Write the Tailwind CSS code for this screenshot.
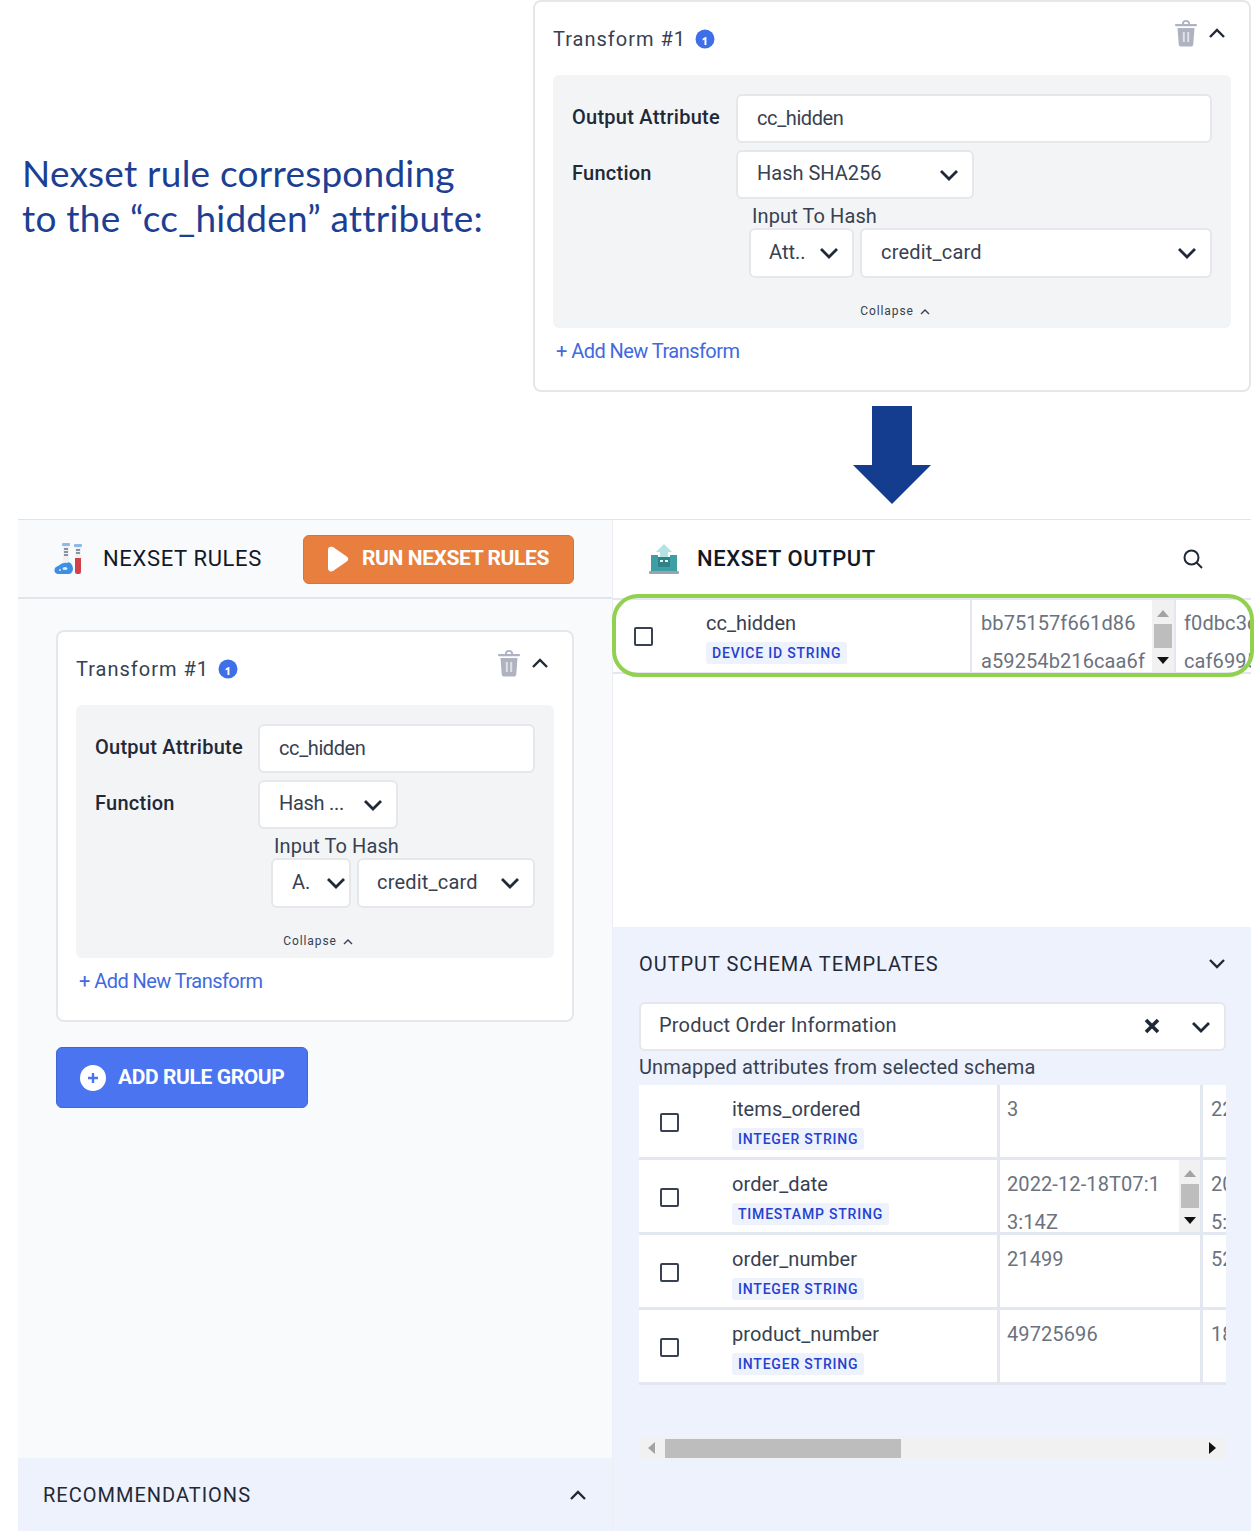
<!doctype html>
<html lang="en">
<head>
  <meta charset="UTF-8" />
  <title>Nexset rule</title>
  <script src="https://cdn.jsdelivr.net/npm/@tailwindcss/browser@4"></script>
</head>
<body class="bg-white">
<div class="relative w-[1254px] h-[1531px] overflow-hidden font-['Roboto',sans-serif] text-[#1f2937]">

  <!-- Top: caption and transform card -->
  <div class="flex h-[519px]">
    <div class="w-[533px] shrink-0 pl-[22px] pt-[150px] font-['Lato',sans-serif] text-[37px] leading-[45px] tracking-[.22px] text-[#1c3f94]">
      Nexset rule corresponding<br />to the “cc_hidden” attribute:
    </div>
    <div class="w-[718px] shrink-0">
      <div class="h-[392px] bg-white border-2 border-[#e5e7eb] rounded-lg px-[18px] pt-[18px]">
        <div class="flex items-start h-[55px]">
          <span class="mt-[5px] text-[20px] leading-[28px] tracking-[1px] text-[#374151]">Transform #1</span>
          <svg class="ml-[9px] mt-[9px]" width="20" height="20" viewBox="0 0 20 20"><circle cx="10" cy="10" r="9.500" fill="#3f6fe8"/><path d="M7.600 9.700 10.400 7.900h1v8h-1.900V10.400l-1.900 1z" fill="#fff"/></svg>
          <svg class="ml-auto mr-[10px] mt-[0px]" width="24" height="27" viewBox="0 0 24 27"><path d="M8 4V3.500a4 3.500 0 0 1 8 0V4h6a1 1 0 0 1 0 2.200H2A1 1 0 0 1 2 4zM10 4h4V3.500a2 1.800 0 0 0-4 0zM3.500 8h17l-1.200 16a2.800 2.800 0 0 1-2.800 2.600h-9A2.800 2.800 0 0 1 4.700 24z" fill="#aeb3bf"/><path d="M9.800 12v10M14.200 12v10" stroke="#dfe1e6" stroke-width="2"/></svg>
          <svg class="mr-[5px] mt-[7px]" width="18" height="12" viewBox="0 0 18 12"><path d="M2 10 9 3l7 7" fill="none" stroke="#1f2937" stroke-width="2.400"/></svg>
        </div>
        <div class="w-[678px] h-[253px] bg-[#f3f4f6] rounded-md px-[19px] pt-[19px]">
          <div class="flex gap-[17px]">
            <label class="w-[147px] pt-[9px] text-[20px] leading-[28px] tracking-[.25px] font-medium whitespace-nowrap text-[#1f2937]">Output Attribute</label>
            <div class="flex items-center w-[476px] h-[49px] bg-white border-2 border-[#e5e7eb] rounded-md px-[19px] pb-[2px] text-[20px] tracking-[-.4px] text-[#374151]">cc_hidden</div>
          </div>
          <div class="flex gap-[17px] mt-[7px]">
            <label class="w-[147px] pt-[9px] text-[20px] leading-[28px] tracking-[.25px] font-medium text-[#1f2937]">Function</label>
            <div class="flex items-center justify-between w-[238px] h-[49px] bg-white border-2 border-[#e5e7eb] rounded-md pl-[19px] pr-[13px] text-[20px] text-[#374151]">
              <span class="mb-[3px]">Hash SHA256</span>
              <svg width="20" height="12" viewBox="0 0 20 12"><path d="M2 2l8 8 8-8" fill="none" stroke="#1f2937" stroke-width="2.800"/></svg>
            </div>
          </div>
          <div class="ml-[180px] mt-[4px] text-[20px] leading-[26px] tracking-[.1px] text-[#374151]">Input To Hash</div>
          <div class="flex gap-[6px] ml-[177px] mt-[-1px]">
            <div class="flex items-center justify-between w-[105px] h-[50px] bg-white border-2 border-[#e5e7eb] rounded-md pl-[18px] pr-[13px] text-[20px] text-[#374151]">
              <span class="mb-[3px]">Att..</span>
              <svg width="20" height="12" viewBox="0 0 20 12"><path d="M2 2l8 8 8-8" fill="none" stroke="#1f2937" stroke-width="2.800"/></svg>
            </div>
            <div class="flex items-center justify-between w-[352px] h-[50px] bg-white border-2 border-[#e5e7eb] rounded-md pl-[19px] pr-[13px] text-[20px] tracking-[.2px] text-[#374151]">
              <span class="mb-[3px]">credit_card</span>
              <svg width="20" height="12" viewBox="0 0 20 12"><path d="M2 2l8 8 8-8" fill="none" stroke="#1f2937" stroke-width="2.800"/></svg>
            </div>
          </div>
          <div class="flex items-center justify-center gap-[6px] mt-[25px] ml-[6px] text-[12px] leading-[16px] tracking-[.9px] text-[#374151]">
            Collapse
            <svg width="10" height="7" viewBox="0 0 10 7"><path d="M1 6l4-4 4 4" fill="none" stroke="#374151" stroke-width="1.400"/></svg>
          </div>
        </div>
        <div class="mt-[9px] ml-[3px] text-[20px] leading-[28px] tracking-[-.55px] text-[#4169e1]">+ Add New Transform</div>
      </div>
    </div>
  </div>

  <!-- Arrow between the card and the panels -->
  <svg class="absolute left-[852px] top-[406px]" width="80" height="99" viewBox="0 0 80 99"><path d="M20 0h40v59h19L40 98 1 59h19z" fill="#143d8f"/></svg>

  <!-- Panels -->
  <div class="flex ml-[18px] w-[1233px] h-[1012px] border-t border-[#dfe3ea]">

    <!-- Nexset rules -->
    <div class="flex flex-col w-[595px] shrink-0 bg-[#f9fafc] border-r border-[#eceef2]">
      <div class="flex items-center h-[79px] shrink-0 border-b-2 border-[#e2e5eb] pl-[36px]">
        <svg width="30" height="33" viewBox="0 0 30 33">
          <rect x="9" y="4" width="6" height="18" fill="#eef0f4"/>
          <path d="M10 7h4M10 10h4M10 13h4" stroke="#6b7280" stroke-width="1.500"/>
          <rect x="8" y="1" width="8" height="3" rx="1" fill="#8db8e8"/>
          <rect x="21" y="5" width="6" height="12" fill="#eef0f4"/>
          <path d="M22 8h4M22 11h4" stroke="#6b7280" stroke-width="1.500"/>
          <rect x="20" y="2" width="8" height="3" rx="1" fill="#8db8e8"/>
          <path d="M21 16h6v14a2 2 0 0 1-2 2h-2a2 2 0 0 1-2-2z" fill="#d2404a"/>
          <path d="M4 24q5-4 9-3 3-2 5 2 2 4 0 7-1 2-3 2H4q-4-1-3.500-4 0-3 3.500-4z" fill="#3c8ee6"/>
          <ellipse cx="11" cy="26.500" rx="2.500" ry="1.500" fill="#dbeafe"/>
          <circle cx="6" cy="28" r="1" fill="#dbeafe"/>
        </svg>
        <span class="ml-[19px] w-[162px] text-[22px] leading-[28px] tracking-[.65px] whitespace-nowrap text-[#111827]">NEXSET RULES</span>
        <div class="flex items-center ml-[38px] mt-[1px] w-[271px] h-[49px] bg-[#e97f3f] border border-[#d9733a] rounded-md pl-[23px]">
          <svg width="22" height="26" viewBox="0 0 22 26"><path d="M1 4c0-3 2-4 5-3l13 9c3 2 3 4 0 6L6 25c-3 1-5 0-5-3z" fill="#fff"/></svg>
          <span class="ml-[13px] text-[21px] font-bold tracking-[-.4px] whitespace-nowrap text-white">RUN NEXSET RULES</span>
        </div>
      </div>

      <div class="flex-1 pl-[38px] pt-[31px]">
        <div class="w-[518px] h-[392px] bg-white border-2 border-[#e5e7eb] rounded-lg px-[18px] pt-[18px]">
          <div class="flex items-start h-[55px]">
            <span class="mt-[5px] text-[20px] leading-[28px] tracking-[1px] text-[#374151]">Transform #1</span>
            <svg class="ml-[9px] mt-[9px]" width="20" height="20" viewBox="0 0 20 20"><circle cx="10" cy="10" r="9.500" fill="#3f6fe8"/><path d="M7.600 9.700 10.400 7.900h1v8h-1.900V10.400l-1.900 1z" fill="#fff"/></svg>
            <svg class="ml-auto mr-[10px] mt-[0px]" width="24" height="27" viewBox="0 0 24 27"><path d="M8 4V3.500a4 3.500 0 0 1 8 0V4h6a1 1 0 0 1 0 2.200H2A1 1 0 0 1 2 4zM10 4h4V3.500a2 1.800 0 0 0-4 0zM3.500 8h17l-1.200 16a2.800 2.800 0 0 1-2.800 2.600h-9A2.800 2.800 0 0 1 4.700 24z" fill="#aeb3bf"/><path d="M9.800 12v10M14.200 12v10" stroke="#dfe1e6" stroke-width="2"/></svg>
            <svg class="mr-[5px] mt-[7px]" width="18" height="12" viewBox="0 0 18 12"><path d="M2 10 9 3l7 7" fill="none" stroke="#1f2937" stroke-width="2.400"/></svg>
          </div>
          <div class="w-[478px] h-[253px] bg-[#f3f4f6] rounded-md px-[19px] pt-[19px]">
            <div class="flex gap-[17px]">
              <label class="w-[146px] pt-[9px] text-[20px] leading-[28px] tracking-[.25px] font-medium whitespace-nowrap">Output Attribute</label>
              <div class="flex items-center w-[277px] h-[49px] bg-white border-2 border-[#e5e7eb] rounded-md px-[19px] pb-[2px] text-[20px] tracking-[-.4px] text-[#374151]">cc_hidden</div>
            </div>
            <div class="flex gap-[17px] mt-[7px]">
              <label class="w-[146px] pt-[9px] text-[20px] leading-[28px] tracking-[.25px] font-medium">Function</label>
              <div class="flex items-center justify-between w-[140px] h-[49px] bg-white border-2 border-[#e5e7eb] rounded-md pl-[19px] pr-[13px] text-[20px] tracking-[-.3px] text-[#374151]">
                <span class="mb-[3px] whitespace-nowrap">Hash ...</span>
                <svg width="20" height="12" viewBox="0 0 20 12"><path d="M2 2l8 8 8-8" fill="none" stroke="#1f2937" stroke-width="2.800"/></svg>
              </div>
            </div>
            <div class="ml-[179px] mt-[4px] text-[20px] leading-[26px] tracking-[.1px] text-[#374151]">Input To Hash</div>
            <div class="flex gap-[6px] ml-[176px] mt-[-1px]">
              <div class="flex items-center justify-between w-[80px] h-[50px] bg-white border-2 border-[#e5e7eb] rounded-md pl-[19px] pr-[3px] text-[20px] text-[#374151]">
                <span class="mb-[3px]">A.</span>
                <svg width="20" height="12" viewBox="0 0 20 12"><path d="M2 2l8 8 8-8" fill="none" stroke="#1f2937" stroke-width="2.800"/></svg>
              </div>
              <div class="flex items-center justify-between w-[178px] h-[50px] bg-white border-2 border-[#e5e7eb] rounded-md pl-[18px] pr-[13px] text-[20px] tracking-[.2px] text-[#374151]">
                <span class="mb-[3px]">credit_card</span>
                <svg width="20" height="12" viewBox="0 0 20 12"><path d="M2 2l8 8 8-8" fill="none" stroke="#1f2937" stroke-width="2.800"/></svg>
              </div>
            </div>
            <div class="flex items-center justify-center gap-[6px] mt-[25px] ml-[6px] text-[12px] leading-[16px] tracking-[.9px] text-[#374151]">
              Collapse
              <svg width="10" height="7" viewBox="0 0 10 7"><path d="M1 6l4-4 4 4" fill="none" stroke="#374151" stroke-width="1.400"/></svg>
            </div>
          </div>
          <div class="mt-[9px] ml-[3px] text-[20px] leading-[28px] tracking-[-.55px] text-[#4169e1]">+ Add New Transform</div>
        </div>

        <div class="flex items-center mt-[25px] w-[252px] h-[61px] bg-[#4a74f0] border border-[#3f66da] rounded-md pl-[23px]">
          <svg width="26" height="26" viewBox="0 0 26 26"><circle cx="13" cy="13" r="13" fill="#fff"/><path d="M13 8v10M8 13h10" stroke="#4a74f0" stroke-width="2.400"/></svg>
          <span class="ml-[12px] text-[21px] font-bold tracking-[-.4px] whitespace-nowrap text-white">ADD RULE GROUP</span>
        </div>
      </div>

      <div class="flex items-center justify-between h-[73px] shrink-0 bg-[#eef2fd] pl-[25px] pr-[25px]">
        <span class="text-[20px] tracking-[1px] text-[#1f2937]">RECOMMENDATIONS</span>
        <svg width="18" height="12" viewBox="0 0 18 12"><path d="M2 10 9 3l7 7" fill="none" stroke="#1f2937" stroke-width="2.400"/></svg>
      </div>
    </div>

    <!-- Nexset output -->
    <div class="flex flex-col flex-1 min-w-0 bg-white">
      <div class="flex items-center h-[78px] shrink-0 pl-[36px] pr-[47px]">
        <svg width="30" height="32" viewBox="0 0 30 32">
          <path d="M15 1l8 8h-4v5h-8V9H7z" fill="#b5e3e3"/>
          <path d="M2 12h7v4h12v-4h7v16H2z" fill="#3d9ea3"/>
          <rect x="9" y="14" width="12" height="10" fill="#2f8388"/>
          <path d="M11 18h3M16 18h3" stroke="#e6f5f5" stroke-width="2"/>
          <rect x="0" y="28" width="30" height="3" rx="1" fill="#98a4ab"/>
        </svg>
        <span class="ml-[18px] text-[22px] leading-[28px] tracking-[.6px] text-[#111827] font-medium">NEXSET OUTPUT</span>
        <svg class="ml-auto" width="22" height="22" viewBox="0 0 22 22"><circle cx="9.500" cy="9.500" r="7" fill="none" stroke="#1f2937" stroke-width="2"/><path d="M14.500 14.500 20 20" stroke="#1f2937" stroke-width="2"/></svg>
      </div>

      <!-- Result row -->
      <div class="flex h-[76px] shrink-0 border-t-2 border-b-2 border-[#e2e7f0] overflow-hidden">
        <div class="w-[93px] shrink-0 pl-[21px] pt-[27px]"><div class="w-[19px] h-[19px] border-2 border-[#374151] rounded-[2px]"></div></div>
        <div class="w-[264px] shrink-0 pt-[10px]">
          <div class="text-[20px] leading-[26px] text-[#374151]">cc_hidden</div>
          <span class="inline-block mt-[6px] px-[6px] h-[22px] leading-[22px] bg-[#eef2fd] rounded-[3px] text-[14px] font-medium tracking-[.8px] text-[#2541d0]">DEVICE ID STRING</span>
        </div>
        <div class="flex w-[204px] shrink-0 border-l-2 border-[#e2e7f0] pl-[9px]">
          <div class="flex-1 pt-[4px] text-[20px] leading-[38px] tracking-[.1px] text-[#6b7280] whitespace-nowrap">bb75157f661d86<br />a59254b216caa6f</div>
          <div class="flex flex-col items-center w-[22px] shrink-0 bg-[#f1f1f1] pt-[10px]">
            <svg width="12" height="7" viewBox="0 0 12 7"><path d="M6 0l6 7H0z" fill="#a3a3a3"/></svg>
            <div class="w-[18px] h-[24px] mt-[7px] bg-[#bdbdbd]"></div>
            <svg class="mt-[9px]" width="12" height="7" viewBox="0 0 12 7"><path d="M6 7 0 0h12z" fill="#111"/></svg>
          </div>
        </div>
        <div class="flex-1 min-w-0 border-l-2 border-[#e2e7f0] pl-[8px] pt-[4px] text-[20px] leading-[38px] tracking-[.1px] text-[#6b7280] overflow-hidden whitespace-nowrap">f0dbc3d<br />caf6995</div>
      </div>

      <div class="flex-1"></div>

      <!-- Output schema templates -->
      <div class="h-[604px] shrink-0 bg-[#eef2fd] pl-[26px] pr-[25px] pt-[23px]">
        <div class="flex items-center justify-between h-[28px]">
          <span class="text-[20px] tracking-[.95px] text-[#1f2937]">OUTPUT SCHEMA TEMPLATES</span>
          <svg width="18" height="12" viewBox="0 0 18 12"><path d="M2 2l7 7 7-7" fill="none" stroke="#1f2937" stroke-width="2.400"/></svg>
        </div>
        <div class="flex items-center w-[587px] h-[49px] mt-[24px] bg-white border-2 border-[#e5e7eb] rounded-md pl-[18px] pr-[13px] text-[20px] tracking-[.2px] text-[#374151]">
          <span class="mb-[3px]">Product Order Information</span>
          <svg class="ml-auto mb-[2px]" width="16" height="16" viewBox="0 0 16 16"><path d="M2 2l12 12M14 2 2 14" stroke="#1f2937" stroke-width="3.600"/></svg>
          <svg class="ml-[31px]" width="20" height="12" viewBox="0 0 20 12"><path d="M2 2l8 8 8-8" fill="none" stroke="#1f2937" stroke-width="2.800"/></svg>
        </div>
        <div class="mt-[2px] text-[20px] leading-[28px] tracking-[.15px] text-[#374151]">Unmapped attributes from selected schema</div>

        <div class="w-[587px] mt-[4px] overflow-hidden">
          <!-- items_ordered -->
          <div class="flex h-[75px] bg-white border-b-[3px] border-[#e2e7f0]">
            <div class="w-[93px] shrink-0 pl-[21px] pt-[28px]"><div class="w-[19px] h-[19px] border-2 border-[#374151] rounded-[2px]"></div></div>
            <div class="w-[265px] shrink-0 pt-[11px]">
              <div class="text-[20px] leading-[26px] tracking-[.1px] text-[#374151]">items_ordered</div>
              <span class="inline-block mt-[6px] px-[6px] h-[22px] leading-[22px] bg-[#eef2fd] rounded-[3px] text-[14px] font-medium tracking-[.8px] text-[#2541d0]">INTEGER STRING</span>
            </div>
            <div class="w-[203px] shrink-0 border-l-[3px] border-[#e2e7f0] pl-[7px] pt-[11px] text-[20px] leading-[26px] tracking-[.1px] text-[#6b7280]">3</div>
            <div class="flex-1 min-w-0 border-l-[3px] border-[#e2e7f0] pl-[8px] pt-[11px] text-[20px] leading-[26px] tracking-[.1px] text-[#6b7280] overflow-hidden whitespace-nowrap">22</div>
          </div>
          <!-- order_date -->
          <div class="flex h-[75px] bg-white border-b-[3px] border-[#e2e7f0] overflow-hidden">
            <div class="w-[93px] shrink-0 pl-[21px] pt-[28px]"><div class="w-[19px] h-[19px] border-2 border-[#374151] rounded-[2px]"></div></div>
            <div class="w-[265px] shrink-0 pt-[11px]">
              <div class="text-[20px] leading-[26px] tracking-[.1px] text-[#374151]">order_date</div>
              <span class="inline-block mt-[6px] px-[6px] h-[22px] leading-[22px] bg-[#eef2fd] rounded-[3px] text-[14px] font-medium tracking-[.8px] text-[#2541d0]">TIMESTAMP STRING</span>
            </div>
            <div class="flex w-[203px] shrink-0 border-l-[3px] border-[#e2e7f0] pl-[7px]">
              <div class="flex-1 pt-[5px] text-[20px] leading-[38px] tracking-[.1px] text-[#6b7280] whitespace-nowrap">2022-12-18T07:1<br />3:14Z</div>
              <div class="flex flex-col items-center w-[21px] shrink-0 bg-[#f1f1f1] pt-[10px]">
                <svg width="12" height="7" viewBox="0 0 12 7"><path d="M6 0l6 7H0z" fill="#a3a3a3"/></svg>
                <div class="w-[18px] h-[24px] mt-[7px] bg-[#bdbdbd]"></div>
                <svg class="mt-[9px]" width="12" height="7" viewBox="0 0 12 7"><path d="M6 7 0 0h12z" fill="#111"/></svg>
              </div>
            </div>
            <div class="flex-1 min-w-0 border-l-[3px] border-[#e2e7f0] pl-[8px] pt-[5px] text-[20px] leading-[38px] tracking-[.1px] text-[#6b7280] overflow-hidden whitespace-nowrap">20<br />5:</div>
          </div>
          <!-- order_number -->
          <div class="flex h-[75px] bg-white border-b-[3px] border-[#e2e7f0]">
            <div class="w-[93px] shrink-0 pl-[21px] pt-[28px]"><div class="w-[19px] h-[19px] border-2 border-[#374151] rounded-[2px]"></div></div>
            <div class="w-[265px] shrink-0 pt-[11px]">
              <div class="text-[20px] leading-[26px] tracking-[.1px] text-[#374151]">order_number</div>
              <span class="inline-block mt-[6px] px-[6px] h-[22px] leading-[22px] bg-[#eef2fd] rounded-[3px] text-[14px] font-medium tracking-[.8px] text-[#2541d0]">INTEGER STRING</span>
            </div>
            <div class="w-[203px] shrink-0 border-l-[3px] border-[#e2e7f0] pl-[7px] pt-[11px] text-[20px] leading-[26px] tracking-[.1px] text-[#6b7280]">21499</div>
            <div class="flex-1 min-w-0 border-l-[3px] border-[#e2e7f0] pl-[8px] pt-[11px] text-[20px] leading-[26px] tracking-[.1px] text-[#6b7280] overflow-hidden whitespace-nowrap">52</div>
          </div>
          <!-- product_number -->
          <div class="flex h-[75px] bg-white border-b-[3px] border-[#e2e7f0]">
            <div class="w-[93px] shrink-0 pl-[21px] pt-[28px]"><div class="w-[19px] h-[19px] border-2 border-[#374151] rounded-[2px]"></div></div>
            <div class="w-[265px] shrink-0 pt-[11px]">
              <div class="text-[20px] leading-[26px] tracking-[.1px] text-[#374151]">product_number</div>
              <span class="inline-block mt-[6px] px-[6px] h-[22px] leading-[22px] bg-[#eef2fd] rounded-[3px] text-[14px] font-medium tracking-[.8px] text-[#2541d0]">INTEGER STRING</span>
            </div>
            <div class="w-[203px] shrink-0 border-l-[3px] border-[#e2e7f0] pl-[7px] pt-[11px] text-[20px] leading-[26px] tracking-[.1px] text-[#6b7280]">49725696</div>
            <div class="flex-1 min-w-0 border-l-[3px] border-[#e2e7f0] pl-[8px] pt-[11px] text-[20px] leading-[26px] tracking-[.1px] text-[#6b7280] overflow-hidden whitespace-nowrap">18</div>
          </div>
        </div>

        <!-- Horizontal scrollbar -->
        <div class="flex items-center w-[587px] h-[22px] mt-[52px] bg-[#f1f1f1] pl-[9px] pr-[10px]">
          <svg width="7" height="12" viewBox="0 0 7 12"><path d="M0 6l7-6v12z" fill="#a3a3a3"/></svg>
          <div class="w-[236px] h-[19px] ml-[10px] bg-[#bdbdbd]"></div>
          <svg class="ml-auto" width="7" height="12" viewBox="0 0 7 12"><path d="M7 6 0 0v12z" fill="#111"/></svg>
        </div>
      </div>
    </div>
  </div>

  <!-- Green highlight over the result row -->
  <div class="absolute left-[612px] top-[594px] w-[642px] h-[83px] border-[4px] border-[#92d050] rounded-[26px]"></div>
</div>
</body>
</html>
